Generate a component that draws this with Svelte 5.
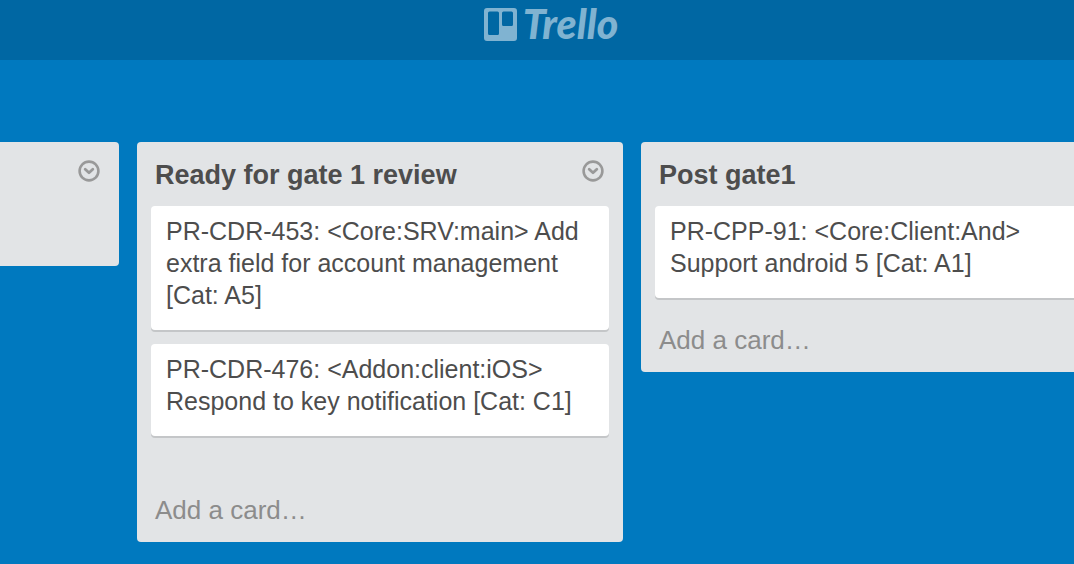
<script>
  const lists = [
    { id: 'previous', title: '', cards: [], slack: false },
    {
      id: 'ready',
      title: 'Ready for gate 1 review',
      cards: [
        'PR-CDR-453: <Core:SRV:main> Add extra field for account management [Cat: A5]',
        'PR-CDR-476: <Addon:client:iOS> Respond to key notification [Cat: C1]'
      ],
      slack: true
    },
    {
      id: 'post',
      title: 'Post gate1',
      cards: ['PR-CPP-91: <Core:Client:And> Support android 5 [Cat: A1]'],
      slack: false
    }
  ];
</script>

<div class="page">
  <header>
    <a class="logo" href="#home">
      <svg width="33" height="33" viewBox="0 0 33 33" aria-hidden="true">
        <path
          fill="currentColor"
          fill-rule="evenodd"
          d="M3 0H30a3 3 0 0 1 3 3V30a3 3 0 0 1-3 3H3a3 3 0 0 1-3-3V3a3 3 0 0 1 3-3ZM5.500 3.500a1.500 1.500 0 0 0-1.500 1.500V25.500a1.500 1.500 0 0 0 1.500 1.500H13.500a1.500 1.500 0 0 0 1.500-1.500V5a1.500 1.500 0 0 0-1.500-1.500ZM19.500 3.500a1.500 1.500 0 0 0-1.500 1.500V16.500a1.500 1.500 0 0 0 1.500 1.500H27.500a1.500 1.500 0 0 0 1.500-1.500V5a1.500 1.500 0 0 0-1.500-1.500Z"
        />
      </svg>
      <span>Trello</span>
    </a>
  </header>

  <main>
    <div class="track">
      {#each lists as list (list.id)}
        <section class="list">
          <div class="list-head">
            {#if list.title}<h2>{list.title}</h2>{/if}
            <button class="menu" aria-haspopup="menu">
              <svg width="22" height="22" viewBox="0 0 22 22" fill="none" stroke="currentColor" aria-hidden="true">
                <circle cx="11" cy="11" r="9.400" stroke-width="2.600" />
                <path d="M7.200 9.200L11 12.700L14.800 9.200" stroke-width="2.800" stroke-linecap="round" stroke-linejoin="round" />
              </svg>
            </button>
          </div>
          {#if list.cards.length}
            <div class="cards" class:slack={list.slack}>
              {#each list.cards as card}
                <article>{card}</article>
              {/each}
            </div>
          {/if}
          <div class="list-foot">
            {#if list.title}<button class="add">Add a card…</button>{/if}
          </div>
        </section>
      {/each}
    </div>
  </main>
</div>

<style>
  :global(body) {
    background: #0079bf;
  }
  .page {
    min-height: 100vh;
    overflow: hidden;
    font-family: 'Liberation Sans', Arial, sans-serif;
    font-size: 26px;
    line-height: 32px;
    color: #4d4d4d;
  }
  header {
    display: flex;
    justify-content: center;
    height: 60px;
    padding-left: 28px;
    background: #0067a3;
  }
  .logo {
    display: flex;
    gap: 6px;
    padding-top: 8px;
    height: 33px;
    color: #80b3d1;
    text-decoration: none;
  }
  .logo span {
    font: italic 900 41px/32px Lato, sans-serif;
  }
  main {
    padding-top: 82px;
  }
  /* The board is scrolled so that the first list is partly off the left side. */
  .track {
    display: flex;
    align-items: flex-start;
    gap: 18px;
    margin-left: -367px;
  }
  .list {
    flex: 0 0 486px;
    box-sizing: border-box;
    padding: 0 14px;
    border-radius: 4px;
    background: #e2e4e6;
  }
  .list-head {
    display: flex;
    justify-content: flex-end;
    align-items: flex-start;
    height: 48px;
    padding: 16px 5px 0 4px;
  }
  h2 {
    flex: 1;
    margin: 0;
    font-size: 27px;
    line-height: 34px;
    font-weight: bold;
  }
  button {
    border: 0;
    padding: 0;
    background: none;
    font: inherit;
    cursor: pointer;
  }
  .menu {
    display: block;
    padding-top: 2px;
    color: #999;
  }
  .menu svg {
    display: block;
  }
  .cards {
    display: flex;
    flex-direction: column;
    gap: 14px;
    padding-bottom: 14px;
  }
  .cards.slack {
    padding-bottom: 46px;
  }
  article {
    padding: 9px 15px 19px;
    border-radius: 4px;
    background: #fff;
    box-shadow: 0 2px 0 #c4c6c8;
    font-size: 25px;
  }
  .list-foot {
    height: 48px;
    padding: 12px 4px 0;
  }
  .add {
    display: block;
    color: #8c8c8c;
  }
</style>
